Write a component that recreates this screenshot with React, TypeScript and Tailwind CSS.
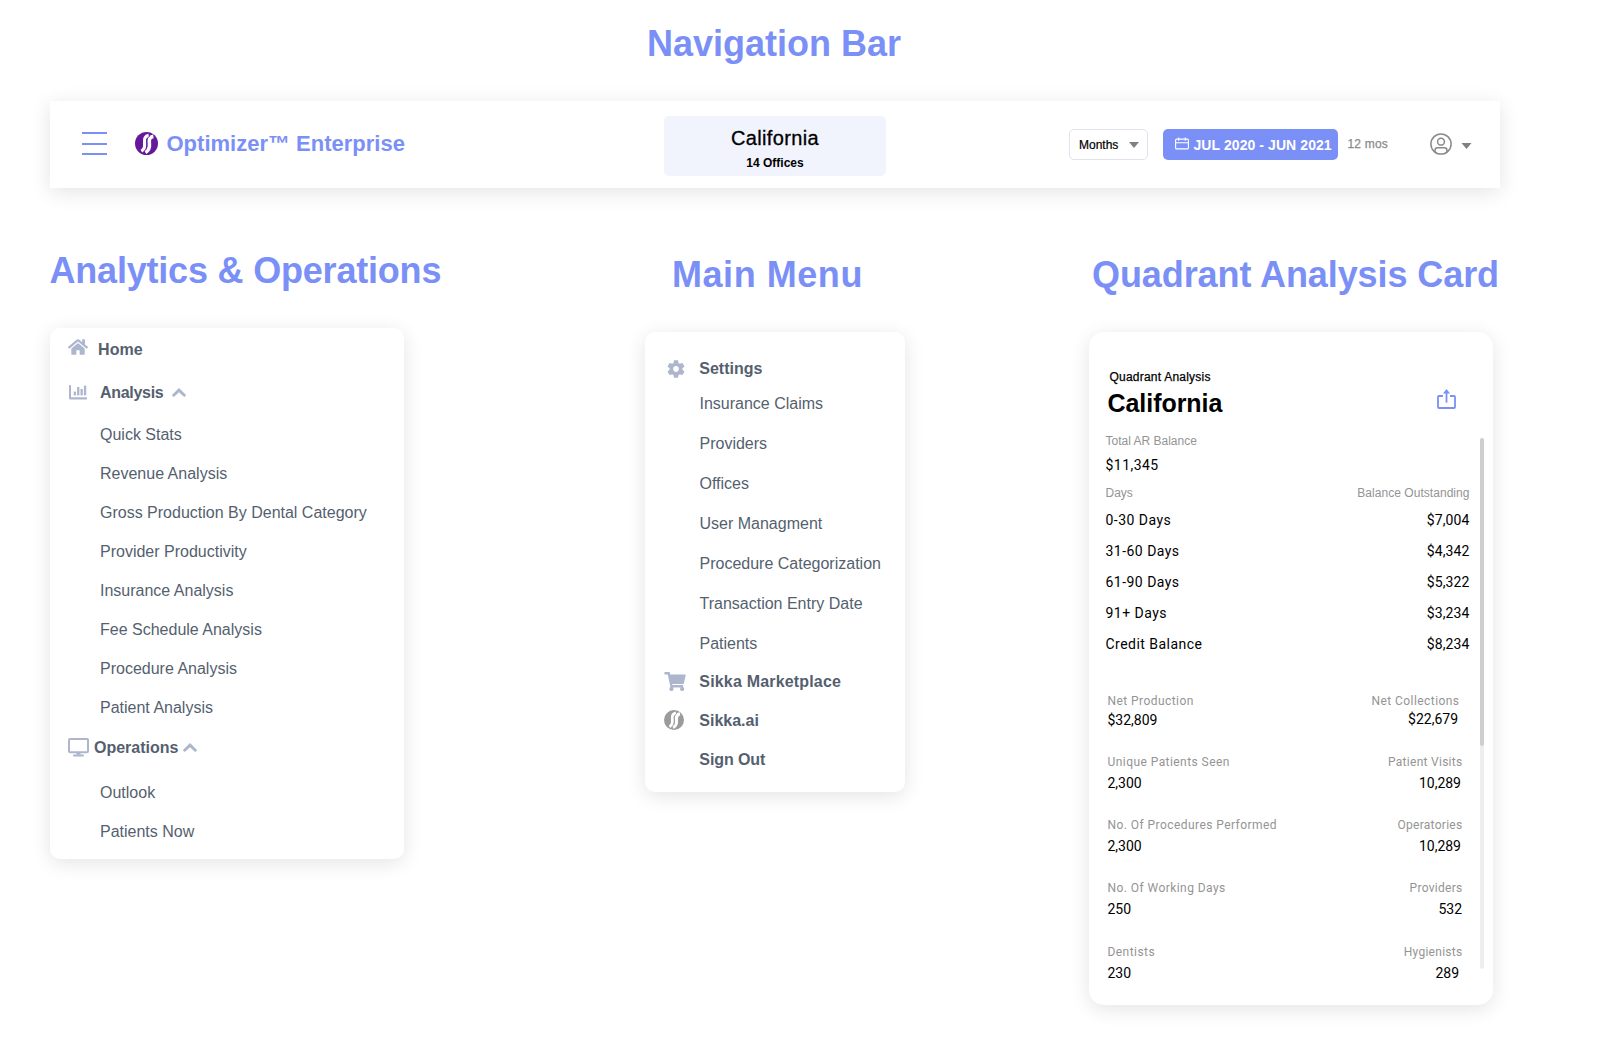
import type { ReactNode } from "react";
import { FaHome, FaShoppingCart } from "react-icons/fa";

const sans = "font-['Liberation_Sans',Arial,sans-serif]";
const roboto = "font-[Roboto,sans-serif]";

function SikkaLogo({ className }: { className: string }) {
  return (
    <svg viewBox="0 0 24 24" className={className} fill="none">
      <circle cx="12" cy="12" r="12" fill="currentColor" />
      <g stroke="white">
        <path d="M14.3 3.6C9.4 4.6 9.6 8.2 10 11.4C10.4 15.2 9.6 18.4 6.6 20" strokeWidth="3.4" />
        <path d="M19.2 4.6C14.4 5.4 14.5 8.8 14.9 12C15.3 16 14.4 19.2 10.8 21.2" strokeWidth="4" />
      </g>
      <path d="M15.4 4.6C11.9 6 12.2 9 12.6 12C13 15.8 12 18.8 9 20.6" stroke="currentColor" strokeWidth="0.9" />
    </svg>
  );
}

function ChevronUp({ className }: { className: string }) {
  return (
    <svg viewBox="0 0 14 9" className={className} fill="none" stroke="#adb6cd" strokeWidth="2.9" strokeLinecap="round">
      <path d="M1.7 7.2L7 2.1L12.3 7.2" />
    </svg>
  );
}

function ChartIcon({ className }: { className: string }) {
  return (
    <svg viewBox="0 0 18 15" className={className} fill="#adb6cd">
      <path d="M0 .6Q0 0 .6 0H1.4Q2 0 2 .6V12.2H17.4Q18 12.2 18 12.8V13.9Q18 14.5 17.4 14.5H1.2Q0 14.5 0 13.3Z" />
      <rect x="4.7" y="6.6" width="2.3" height="3.8" />
      <rect x="8.1" y="2" width="2.3" height="8.4" />
      <rect x="11.5" y="4" width="2.3" height="6.4" />
      <rect x="14.9" y="0.6" width="2.3" height="9.8" />
    </svg>
  );
}

function MonitorIcon({ className }: { className: string }) {
  return (
    <svg viewBox="0 0 21 19" className={className} fill="none">
      <rect x="1" y="1" width="19" height="13.2" rx="1" stroke="#adb6cd" strokeWidth="2" />
      <path d="M8.6 15H12.4L12.8 16.8H8.2Z" fill="#adb6cd" />
      <rect x="5" y="16.6" width="11" height="1.9" rx=".9" fill="#adb6cd" />
    </svg>
  );
}

function GearIcon({ className }: { className: string }) {
  return (
    <svg viewBox="2 2 20 20" className={className} fill="#adb6cd">
      <path d="M19.14 12.94c.04-.3.06-.61.06-.94 0-.32-.02-.64-.07-.94l2.03-1.58c.18-.14.23-.41.12-.61l-1.92-3.32c-.12-.22-.37-.29-.59-.22l-2.39.96c-.5-.38-1.03-.7-1.62-.94L14.4 2.81c-.04-.24-.24-.41-.48-.41h-3.84c-.24 0-.43.17-.47.41L9.25 5.35c-.59.24-1.13.57-1.62.94l-2.39-.96c-.22-.08-.47 0-.59.22L2.74 8.87c-.12.21-.08.47.12.61l2.03 1.58c-.05.3-.09.63-.09.94s.02.64.07.94l-2.03 1.58c-.18.14-.23.41-.12.61l1.92 3.32c.12.22.37.29.59.22l2.39-.96c.5.38 1.03.7 1.62.94l.36 2.54c.05.24.24.41.48.41h3.84c.24 0 .44-.17.47-.41l.36-2.54c.59-.24 1.13-.56 1.62-.94l2.39.96c.22.08.47 0 .59-.22l1.92-3.32c.12-.22.07-.47-.12-.61l-2.01-1.58zM12 15.2c-1.77 0-3.2-1.43-3.2-3.2s1.43-3.2 3.2-3.2 3.2 1.43 3.2 3.2-1.43 3.2-3.2 3.2z" />
    </svg>
  );
}

function CalendarIcon({ className }: { className: string }) {
  return (
    <svg viewBox="0 0 14 12" className={className} fill="none" stroke="white" strokeWidth="1.1">
      <rect x=".6" y="1.6" width="12.8" height="9.8" rx="1" />
      <path d="M.5 5.2H13.5M3.7 0V3.2M10.3 0V3.2" />
    </svg>
  );
}

function UserIcon({ className }: { className: string }) {
  return (
    <svg viewBox="0 0 22 22" className={className} fill="none" stroke="#8a8a8a" strokeWidth="1.5">
      <circle cx="11" cy="11" r="10.1" />
      <circle cx="11" cy="8.7" r="3.4" />
      <path d="M5 19.2V17.4Q5 14.8 7.6 14.8H14.4Q17 14.8 17 17.4V19.2" />
    </svg>
  );
}

function ShareIcon({ className }: { className: string }) {
  return (
    <svg viewBox="0 0 19 20" className={className} fill="none" stroke="#7b90f6" strokeWidth="1.8">
      <path d="M6 7H2Q1 7 1 8V18Q1 19 2 19H17Q18 19 18 18V8Q18 7 17 7H13" />
      <path d="M9.5 13.6V2" />
      <path d="M5.9 4.6L9.5 .1L13.1 4.6Z" fill="#7b90f6" stroke="none" />
    </svg>
  );
}

function Caret({ className }: { className: string }) {
  return (
    <svg viewBox="0 0 10 6" className={className} fill="#808080">
      <path d="M0 0H10L5 6Z" />
    </svg>
  );
}

function Heading({ className, children }: { className: string; children: ReactNode }) {
  return <h2 className={`whitespace-nowrap text-[36px] font-bold leading-[44px] text-[#7b90f6] ${className}`}>{children}</h2>;
}

const analysisItems = [
  "Quick Stats",
  "Revenue Analysis",
  "Gross Production By Dental Category",
  "Provider Productivity",
  "Insurance Analysis",
  "Fee Schedule Analysis",
  "Procedure Analysis",
  "Patient Analysis",
];

const settingsItems = [
  "Insurance Claims",
  "Providers",
  "Offices",
  "User Managment",
  "Procedure Categorization",
  "Transaction Entry Date",
  "Patients",
];

const balances = [
  ["0-30 Days", "$7,004"],
  ["31-60 Days", "$4,342"],
  ["61-90 Days", "$5,322"],
  ["91+ Days", "$3,234"],
  ["Credit Balance", "$8,234"],
];

const stats = [
  { left: "Unique Patients Seen", leftValue: "2,300", right: "Patient Visits", rightValue: "10,289", gap: "mt-[23px]", inset: "pr-[8.5px]" },
  { left: "No. Of Procedures Performed", leftValue: "2,300", right: "Operatories", rightValue: "10,289", gap: "mt-[21px]", inset: "pr-[8.5px]" },
  { left: "No. Of Working Days", leftValue: "250", right: "Providers", rightValue: "532", gap: "mt-[21px]", inset: "pr-[7.5px]" },
  { left: "Dentists", leftValue: "230", right: "Hygienists", rightValue: "289", gap: "mt-[22px]", inset: "pr-[10.5px]" },
];

function NavBar() {
  return (
    <nav className="ml-[50px] mt-[35px] flex h-[87px] w-[1450px] items-center bg-white shadow-[0_4px_20px_rgba(0,0,0,0.11)]">
      <div className="mb-0.5 ml-8 flex h-[23px] w-[25px] flex-col justify-between">
        <span className="h-0.5 bg-[#7b90f6]" />
        <span className="h-0.5 bg-[#7b90f6]" />
        <span className="h-0.5 bg-[#7b90f6]" />
      </div>
      <SikkaLogo className="-mt-[3px] ml-7 size-[23px] text-[#65189b]" />
      <span className="-mt-0.5 ml-[8.5px] w-[497.5px] whitespace-nowrap text-[22px] font-bold text-[#7b90f6]">Optimizer™ Enterprise</span>
      <div className="mt-[3px] flex h-[60px] w-[222px] flex-col items-center rounded-[5px] bg-[#f1f3fd] text-black">
        <span className="mt-2.5 text-[20px] leading-6 tracking-[0.36px] [-webkit-text-stroke:0.3px]">California</span>
        <span className="mt-[5px] text-[12px] font-bold leading-4">14 Offices</span>
      </div>
      <div className="ml-[183px] flex h-[31px] w-[79px] items-center justify-between rounded-[5px] border border-[#e2e1ee] pl-[9px] pr-2 text-[12px] text-black [-webkit-text-stroke:0.2px]">
        Months
        <Caret className="h-1.5 w-2.5" />
      </div>
      <div className="ml-[15px] flex h-[31px] w-[175px] items-center rounded-[5px] bg-[#7b90f6] pl-3 text-[14px] font-bold text-white">
        <CalendarIcon className="-mt-0.5 mr-[4.5px] h-[13px] w-3.5" />
        <span className="mt-0.5 whitespace-nowrap tracking-[0.08px]">JUL 2020 - JUN 2021</span>
      </div>
      <span className="-mt-0.5 ml-[9.5px] w-[82px] text-[12px] tracking-[0.2px] text-[#8a8a8a] [-webkit-text-stroke:0.25px]">12 mos</span>
      <UserIcon className="-mt-0.5 size-[22px]" />
      <Caret className="ml-[9.5px] mt-[3px] h-[6px] w-[11px]" />
    </nav>
  );
}

function AnalyticsCard() {
  return (
    <div className="h-[531px] w-[354px] rounded-[10px] bg-white shadow-[0_4px_20px_rgba(0,0,0,0.11)]">
      <div className="flex h-[43px] items-center pl-[17.5px]">
        <FaHome className="-mt-1.5 h-[18px] w-5 text-[#adb6cd]" />
        <span className="ml-[10.5px] font-bold tracking-[0.1px]">Home</span>
      </div>
      <div className="mb-px flex h-[43px] items-center pl-[19px]">
        <ChartIcon className="h-[15px] w-[18px]" />
        <span className="ml-[13px] font-bold tracking-[-0.3px]">Analysis</span>
        <ChevronUp className="ml-[9px] h-[9px] w-[14px]" />
      </div>
      {analysisItems.map((item) => (
        <div key={item} className="h-[39px] pl-[50px] leading-[39px]">{item}</div>
      ))}
      <div className="mb-[5px] flex h-[41px] items-center pl-[18px]">
        <MonitorIcon className="h-[19px] w-[21px]" />
        <span className="ml-[5px] font-bold">Operations</span>
        <ChevronUp className="ml-[5px] h-[9px] w-[14px]" />
      </div>
      <div className="h-[39px] pl-[50px] leading-[39px]">Outlook</div>
      <div className="h-[39px] pl-[50px] leading-[39px]">Patients Now</div>
    </div>
  );
}

function MenuCard() {
  return (
    <div className="h-[460px] w-[260px] rounded-[10px] bg-white pt-[21px] shadow-[0_4px_20px_rgba(0,0,0,0.11)]">
      <div className="flex h-[31px] items-center pl-[22px]">
        <GearIcon className="size-[18px]" />
        <span className="ml-[14.3px] font-bold">Settings</span>
      </div>
      {settingsItems.map((item) => (
        <div key={item} className="h-10 whitespace-nowrap pl-[54.5px] leading-10">{item}</div>
      ))}
      <div className="flex h-[35px] items-center pl-[19px]">
        <FaShoppingCart className="h-[19px] w-[22px] text-[#adb6cd]" />
        <span className="ml-[13.3px] font-bold tracking-[0.18px]">Sikka Marketplace</span>
      </div>
      <div className="flex h-[43px] items-center pl-[19px]">
        <SikkaLogo className="-mt-0.5 size-5 text-[#9b9b9b]" />
        <span className="ml-[15.3px] font-bold">Sikka.ai</span>
      </div>
      <div className="flex h-[35px] items-center pl-[54.3px] font-bold tracking-[-0.08px]">Sign Out</div>
    </div>
  );
}

function QuadrantCard() {
  return (
    <div className="relative h-[673px] w-[404px] rounded-[15px] bg-white pl-[16.5px] pr-[23.5px] pt-[35px] text-black shadow-[0_4px_20px_rgba(0,0,0,0.11)]">
      <div className="flex h-[52px] justify-between">
        <div>
          <div className="pl-1 text-[12px] leading-5 tracking-[0.22px] [-webkit-text-stroke:0.25px]">Quadrant Analysis</div>
          <div className="pl-0.5 text-[25px] font-bold leading-8 tracking-[-0.05px]">California</div>
        </div>
        <ShareIcon className="mr-3.5 mt-[22px] h-5 w-[19px]" />
      </div>
      <div className="mt-3 text-[12px] leading-5 text-[#949494]">Total AR Balance</div>
      <div className={`text-[14px] leading-7 tracking-[0.45px] ${roboto}`}>$11,345</div>
      <div className="flex justify-between text-[12px] leading-7 text-[#949494]">
        <span>Days</span>
        <span className="tracking-[0.04px]">Balance Outstanding</span>
      </div>
      <div className={`flex flex-col gap-[5px] text-[14px] leading-[26px] ${roboto}`}>
        {balances.map(([label, value]) => (
          <div key={label} className="flex justify-between">
            <span className="tracking-[0.47px]">{label}</span>
            <span className="tracking-[0.1px]">{value}</span>
          </div>
        ))}
      </div>
      <div className={`mt-[34px] pl-0.5 ${roboto}`}>
        <div className="flex justify-between pr-2.5 text-[12px] leading-5 tracking-[0.44px] text-[#949494]">
          <span>Net Production</span>
          <span>Net Collections</span>
        </div>
        <div className="flex justify-between pr-[11.5px] text-[14px] leading-[18px]">
          <span>$32,809</span>
          <span className="-mt-px">$22,679</span>
        </div>
        {stats.map((s) => (
          <div key={s.left} className={s.gap}>
            <div className="flex justify-between pr-[7px] text-[12px] leading-5 tracking-[0.44px] text-[#949494]">
              <span>{s.left}</span>
              <span className="tracking-[0.28px]">{s.right}</span>
            </div>
            <div className={`flex justify-between text-[14px] leading-[22px] ${s.inset}`}>
              <span>{s.leftValue}</span>
              <span>{s.rightValue}</span>
            </div>
          </div>
        ))}
      </div>
      <div className="absolute right-[9px] top-[106px] h-[531px] w-1 rounded-full bg-[#eeeeee]">
        <div className="h-[308px] rounded-full bg-[#cfcfcf]" />
      </div>
    </div>
  );
}

export default function App() {
  return (
    <div className={`h-[1048px] w-[1600px] overflow-hidden bg-white text-[16px] text-[#555f6f] ${sans}`}>
      <Heading className="ml-[647px] mt-[22px]">Navigation Bar</Heading>
      <NavBar />
      <div className="flex items-start">
        <section className="ml-[50px] mt-[61px] w-[595px]">
          <Heading className="-ml-[0.5px] mb-[35px] tracking-[-0.2px]">Analytics &amp; Operations</Heading>
          <AnalyticsCard />
        </section>
        <section className="mt-[65px] w-[444px]">
          <Heading className="mb-[35px] pl-[27px] tracking-[0.55px]">Main Menu</Heading>
          <MenuCard />
        </section>
        <section className="mt-[65px]">
          <Heading className="mb-[35px] pl-[3px] tracking-[-0.08px]">Quadrant Analysis Card</Heading>
          <QuadrantCard />
        </section>
      </div>
    </div>
  );
}
